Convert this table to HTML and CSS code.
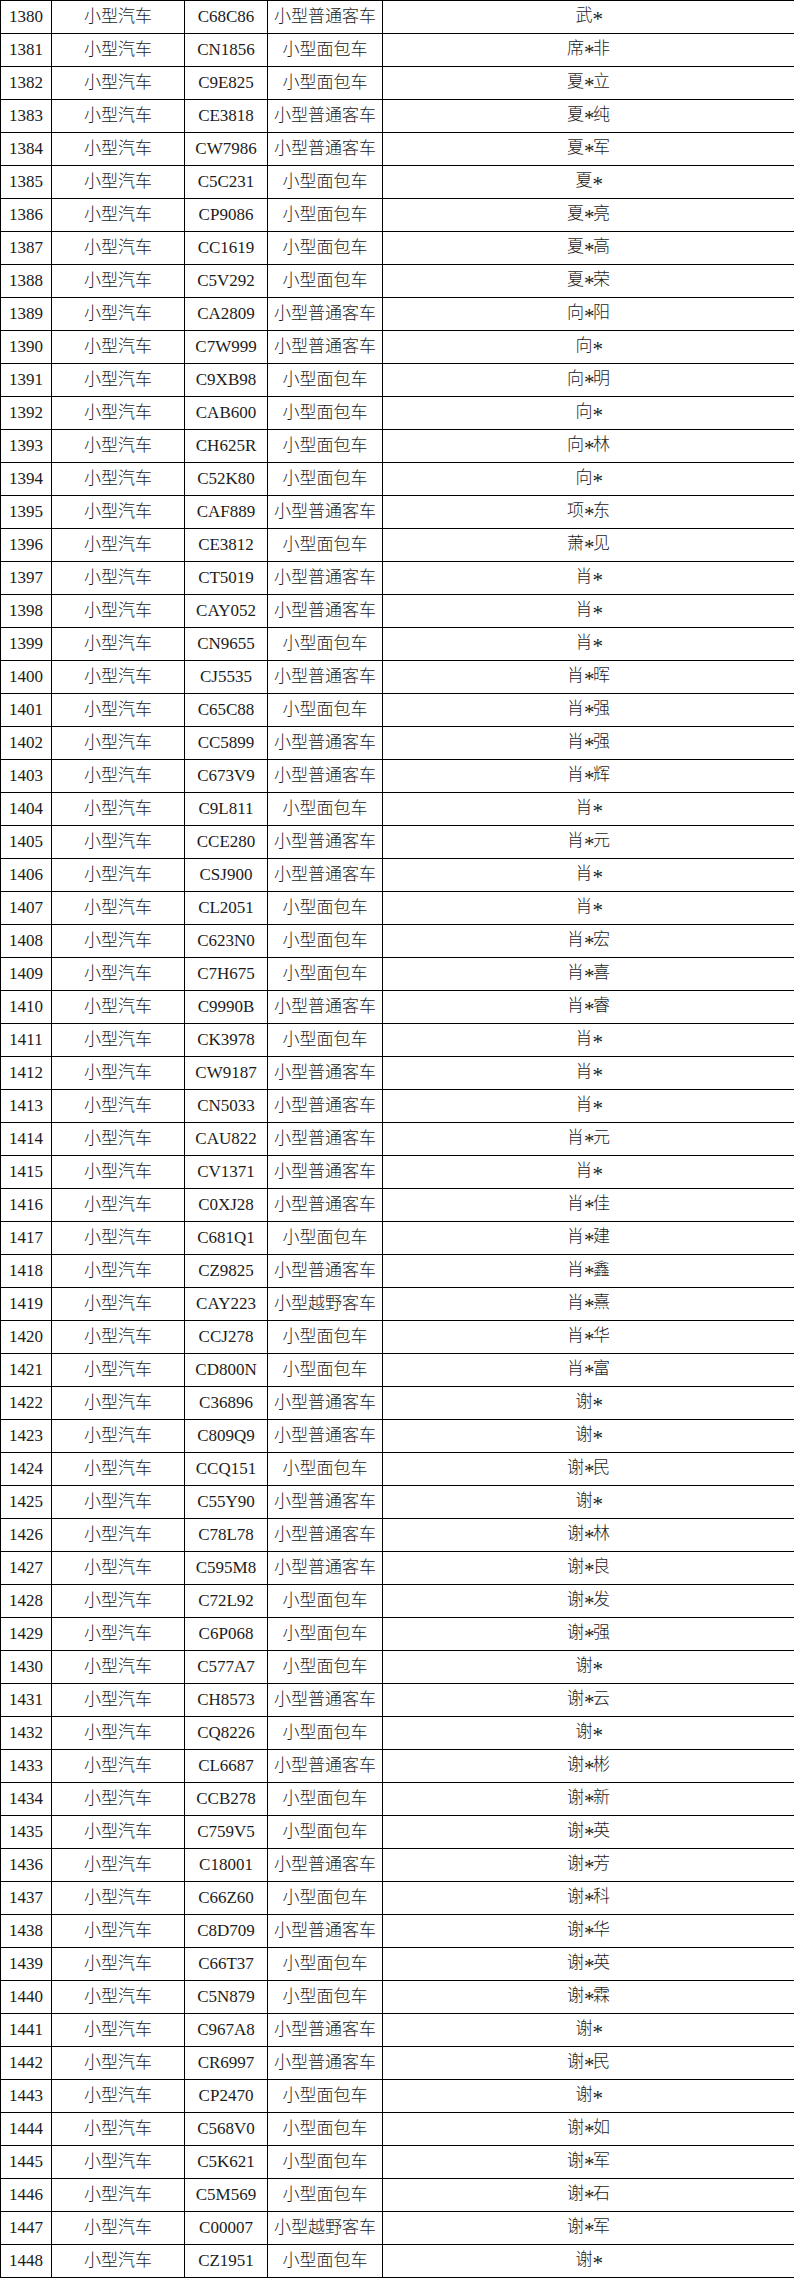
FILE: index.html
```html
<!DOCTYPE html>
<html lang="zh-CN">
<head>
<meta charset="utf-8">
<title>车辆列表</title>
<link rel="stylesheet" href="styles.css">
</head>
<body>
<table class="grid">
<colgroup><col class="c-no"><col class="c-type"><col class="c-plate"><col class="c-model"><col class="c-name"></colgroup>
<tbody>
<tr><td>1380</td><td>小型汽车</td><td>C68C86</td><td>小型普通客车</td><td>武<span class="m">*</span></td></tr>
<tr><td>1381</td><td>小型汽车</td><td>CN1856</td><td>小型面包车</td><td>席<span class="m">*</span>非</td></tr>
<tr><td>1382</td><td>小型汽车</td><td>C9E825</td><td>小型面包车</td><td>夏<span class="m">*</span>立</td></tr>
<tr><td>1383</td><td>小型汽车</td><td>CE3818</td><td>小型普通客车</td><td>夏<span class="m">*</span>纯</td></tr>
<tr><td>1384</td><td>小型汽车</td><td>CW7986</td><td>小型普通客车</td><td>夏<span class="m">*</span>军</td></tr>
<tr><td>1385</td><td>小型汽车</td><td>C5C231</td><td>小型面包车</td><td>夏<span class="m">*</span></td></tr>
<tr><td>1386</td><td>小型汽车</td><td>CP9086</td><td>小型面包车</td><td>夏<span class="m">*</span>亮</td></tr>
<tr><td>1387</td><td>小型汽车</td><td>CC1619</td><td>小型面包车</td><td>夏<span class="m">*</span>高</td></tr>
<tr><td>1388</td><td>小型汽车</td><td>C5V292</td><td>小型面包车</td><td>夏<span class="m">*</span>荣</td></tr>
<tr><td>1389</td><td>小型汽车</td><td>CA2809</td><td>小型普通客车</td><td>向<span class="m">*</span>阳</td></tr>
<tr><td>1390</td><td>小型汽车</td><td>C7W999</td><td>小型普通客车</td><td>向<span class="m">*</span></td></tr>
<tr><td>1391</td><td>小型汽车</td><td>C9XB98</td><td>小型面包车</td><td>向<span class="m">*</span>明</td></tr>
<tr><td>1392</td><td>小型汽车</td><td>CAB600</td><td>小型面包车</td><td>向<span class="m">*</span></td></tr>
<tr><td>1393</td><td>小型汽车</td><td>CH625R</td><td>小型面包车</td><td>向<span class="m">*</span>林</td></tr>
<tr><td>1394</td><td>小型汽车</td><td>C52K80</td><td>小型面包车</td><td>向<span class="m">*</span></td></tr>
<tr><td>1395</td><td>小型汽车</td><td>CAF889</td><td>小型普通客车</td><td>项<span class="m">*</span>东</td></tr>
<tr><td>1396</td><td>小型汽车</td><td>CE3812</td><td>小型面包车</td><td>萧<span class="m">*</span>见</td></tr>
<tr><td>1397</td><td>小型汽车</td><td>CT5019</td><td>小型普通客车</td><td>肖<span class="m">*</span></td></tr>
<tr><td>1398</td><td>小型汽车</td><td>CAY052</td><td>小型普通客车</td><td>肖<span class="m">*</span></td></tr>
<tr><td>1399</td><td>小型汽车</td><td>CN9655</td><td>小型面包车</td><td>肖<span class="m">*</span></td></tr>
<tr><td>1400</td><td>小型汽车</td><td>CJ5535</td><td>小型普通客车</td><td>肖<span class="m">*</span>晖</td></tr>
<tr><td>1401</td><td>小型汽车</td><td>C65C88</td><td>小型面包车</td><td>肖<span class="m">*</span>强</td></tr>
<tr><td>1402</td><td>小型汽车</td><td>CC5899</td><td>小型普通客车</td><td>肖<span class="m">*</span>强</td></tr>
<tr><td>1403</td><td>小型汽车</td><td>C673V9</td><td>小型普通客车</td><td>肖<span class="m">*</span>辉</td></tr>
<tr><td>1404</td><td>小型汽车</td><td>C9L811</td><td>小型面包车</td><td>肖<span class="m">*</span></td></tr>
<tr><td>1405</td><td>小型汽车</td><td>CCE280</td><td>小型普通客车</td><td>肖<span class="m">*</span>元</td></tr>
<tr><td>1406</td><td>小型汽车</td><td>CSJ900</td><td>小型普通客车</td><td>肖<span class="m">*</span></td></tr>
<tr><td>1407</td><td>小型汽车</td><td>CL2051</td><td>小型面包车</td><td>肖<span class="m">*</span></td></tr>
<tr><td>1408</td><td>小型汽车</td><td>C623N0</td><td>小型面包车</td><td>肖<span class="m">*</span>宏</td></tr>
<tr><td>1409</td><td>小型汽车</td><td>C7H675</td><td>小型面包车</td><td>肖<span class="m">*</span>喜</td></tr>
<tr><td>1410</td><td>小型汽车</td><td>C9990B</td><td>小型普通客车</td><td>肖<span class="m">*</span>睿</td></tr>
<tr><td>1411</td><td>小型汽车</td><td>CK3978</td><td>小型面包车</td><td>肖<span class="m">*</span></td></tr>
<tr><td>1412</td><td>小型汽车</td><td>CW9187</td><td>小型普通客车</td><td>肖<span class="m">*</span></td></tr>
<tr><td>1413</td><td>小型汽车</td><td>CN5033</td><td>小型普通客车</td><td>肖<span class="m">*</span></td></tr>
<tr><td>1414</td><td>小型汽车</td><td>CAU822</td><td>小型普通客车</td><td>肖<span class="m">*</span>元</td></tr>
<tr><td>1415</td><td>小型汽车</td><td>CV1371</td><td>小型普通客车</td><td>肖<span class="m">*</span></td></tr>
<tr><td>1416</td><td>小型汽车</td><td>C0XJ28</td><td>小型普通客车</td><td>肖<span class="m">*</span>佳</td></tr>
<tr><td>1417</td><td>小型汽车</td><td>C681Q1</td><td>小型面包车</td><td>肖<span class="m">*</span>建</td></tr>
<tr><td>1418</td><td>小型汽车</td><td>CZ9825</td><td>小型普通客车</td><td>肖<span class="m">*</span>鑫</td></tr>
<tr><td>1419</td><td>小型汽车</td><td>CAY223</td><td>小型越野客车</td><td>肖<span class="m">*</span>熹</td></tr>
<tr><td>1420</td><td>小型汽车</td><td>CCJ278</td><td>小型面包车</td><td>肖<span class="m">*</span>华</td></tr>
<tr><td>1421</td><td>小型汽车</td><td>CD800N</td><td>小型面包车</td><td>肖<span class="m">*</span>富</td></tr>
<tr><td>1422</td><td>小型汽车</td><td>C36896</td><td>小型普通客车</td><td>谢<span class="m">*</span></td></tr>
<tr><td>1423</td><td>小型汽车</td><td>C809Q9</td><td>小型普通客车</td><td>谢<span class="m">*</span></td></tr>
<tr><td>1424</td><td>小型汽车</td><td>CCQ151</td><td>小型面包车</td><td>谢<span class="m">*</span>民</td></tr>
<tr><td>1425</td><td>小型汽车</td><td>C55Y90</td><td>小型普通客车</td><td>谢<span class="m">*</span></td></tr>
<tr><td>1426</td><td>小型汽车</td><td>C78L78</td><td>小型普通客车</td><td>谢<span class="m">*</span>林</td></tr>
<tr><td>1427</td><td>小型汽车</td><td>C595M8</td><td>小型普通客车</td><td>谢<span class="m">*</span>良</td></tr>
<tr><td>1428</td><td>小型汽车</td><td>C72L92</td><td>小型面包车</td><td>谢<span class="m">*</span>发</td></tr>
<tr><td>1429</td><td>小型汽车</td><td>C6P068</td><td>小型面包车</td><td>谢<span class="m">*</span>强</td></tr>
<tr><td>1430</td><td>小型汽车</td><td>C577A7</td><td>小型面包车</td><td>谢<span class="m">*</span></td></tr>
<tr><td>1431</td><td>小型汽车</td><td>CH8573</td><td>小型普通客车</td><td>谢<span class="m">*</span>云</td></tr>
<tr><td>1432</td><td>小型汽车</td><td>CQ8226</td><td>小型面包车</td><td>谢<span class="m">*</span></td></tr>
<tr><td>1433</td><td>小型汽车</td><td>CL6687</td><td>小型普通客车</td><td>谢<span class="m">*</span>彬</td></tr>
<tr><td>1434</td><td>小型汽车</td><td>CCB278</td><td>小型面包车</td><td>谢<span class="m">*</span>新</td></tr>
<tr><td>1435</td><td>小型汽车</td><td>C759V5</td><td>小型面包车</td><td>谢<span class="m">*</span>英</td></tr>
<tr><td>1436</td><td>小型汽车</td><td>C18001</td><td>小型普通客车</td><td>谢<span class="m">*</span>芳</td></tr>
<tr><td>1437</td><td>小型汽车</td><td>C66Z60</td><td>小型面包车</td><td>谢<span class="m">*</span>科</td></tr>
<tr><td>1438</td><td>小型汽车</td><td>C8D709</td><td>小型普通客车</td><td>谢<span class="m">*</span>华</td></tr>
<tr><td>1439</td><td>小型汽车</td><td>C66T37</td><td>小型面包车</td><td>谢<span class="m">*</span>英</td></tr>
<tr><td>1440</td><td>小型汽车</td><td>C5N879</td><td>小型面包车</td><td>谢<span class="m">*</span>霖</td></tr>
<tr><td>1441</td><td>小型汽车</td><td>C967A8</td><td>小型普通客车</td><td>谢<span class="m">*</span></td></tr>
<tr><td>1442</td><td>小型汽车</td><td>CR6997</td><td>小型普通客车</td><td>谢<span class="m">*</span>民</td></tr>
<tr><td>1443</td><td>小型汽车</td><td>CP2470</td><td>小型面包车</td><td>谢<span class="m">*</span></td></tr>
<tr><td>1444</td><td>小型汽车</td><td>C568V0</td><td>小型面包车</td><td>谢<span class="m">*</span>如</td></tr>
<tr><td>1445</td><td>小型汽车</td><td>C5K621</td><td>小型面包车</td><td>谢<span class="m">*</span>军</td></tr>
<tr><td>1446</td><td>小型汽车</td><td>C5M569</td><td>小型面包车</td><td>谢<span class="m">*</span>石</td></tr>
<tr><td>1447</td><td>小型汽车</td><td>C00007</td><td>小型越野客车</td><td>谢<span class="m">*</span>军</td></tr>
<tr><td>1448</td><td>小型汽车</td><td>CZ1951</td><td>小型面包车</td><td>谢<span class="m">*</span></td></tr>
</tbody>
</table>
</body>
</html>
```

FILE: styles.css
```css
html, body {
  margin: 0;
  padding: 0;
  background: #ffffff;
}

.grid {
  width: 794px;
  border-collapse: collapse;
  table-layout: fixed;
  font-family: "Liberation Serif", "Noto Sans CJK SC", serif;
  font-size: 17px;
  font-weight: 300;
  color: #1c1c1c;
}

.c-no { width: 51px; }
.c-type { width: 133px; }
.c-plate { width: 83px; }
.c-model { width: 115px; }
.c-name { width: 412px; }

.grid td {
  border: 1px solid #000000;
  height: 32px;
  padding: 0;
  text-align: center;
  vertical-align: middle;
  white-space: nowrap;
  overflow: hidden;
  line-height: 20px;
}

.m {
  display: inline-block;
  width: 9px;
  font-size: 21px;
  line-height: 20px;
  vertical-align: -5px;
}
```
